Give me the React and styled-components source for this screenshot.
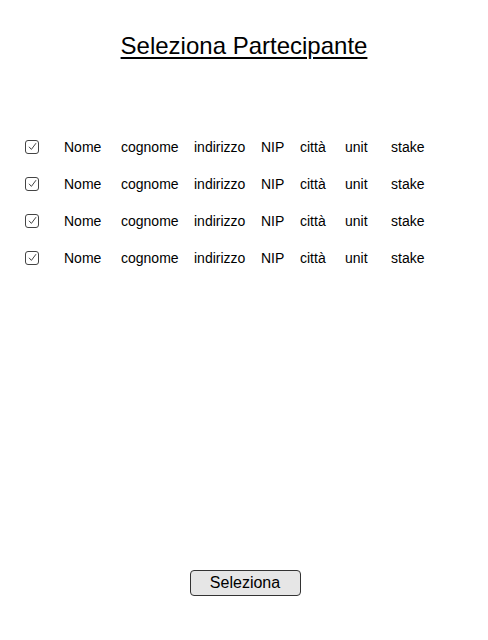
import React from 'react';
import styled, { createGlobalStyle } from 'styled-components';

const GlobalStyle = createGlobalStyle`
  html, body {
    margin: 0;
    padding: 0;
    background: #fff;
  }
  body {
    font-family: "Liberation Sans", Arial, sans-serif;
    color: #000;
  }
`;

const Page = styled.div`
  width: 488px;
  height: 640px;
  display: flex;
  flex-direction: column;
  box-sizing: border-box;
`;

const Title = styled.h1`
  margin: 31px 0 0;
  font-size: 24px;
  font-weight: normal;
  text-align: center;
  text-decoration: underline;
  text-decoration-thickness: 2px;
  text-underline-offset: 3px;
  line-height: 30px;
`;

const List = styled.div`
  margin-top: 67px;
  padding-left: 25px;
  display: flex;
  flex-direction: column;
`;

const Row = styled.div`
  display: grid;
  grid-template-columns: 39px 57px 73px 67px 39px 45px 46px auto;
  align-items: center;
  height: 37px;
  font-size: 14px;
`;

const Cell = styled.span`
  white-space: nowrap;
`;

const Box = styled.span`
  width: 12px;
  height: 12px;
  border: 1.5px solid #444;
  border-radius: 3px;
  display: flex;
  align-items: center;
  justify-content: center;
`;

const Footer = styled.div`
  margin-top: auto;
  margin-bottom: 44px;
  display: flex;
  justify-content: center;
`;

const Button = styled.button`
  width: 111px;
  height: 26px;
  background: #e6e6e6;
  border: 1px solid #333;
  border-radius: 4px;
  font-family: "Liberation Sans", Arial, sans-serif;
  font-size: 16px;
  color: #000;
  padding: 0;
  margin-left: 2px;
`;

const Check = () => (
  <Box>
    <svg width="9" height="9" viewBox="0 0 9 9" fill="none">
      <path d="M1 4.8 L3.4 7.4 L8 1.2" stroke="#444" strokeWidth="1" />
    </svg>
  </Box>
);

const columns = ['Nome', 'cognome', 'indirizzo', 'NIP', 'città', 'unit', 'stake'];

export default function App() {
  return (
    <>
      <GlobalStyle />
      <Page>
        <Title>Seleziona Partecipante</Title>
        <List>
          {[0, 1, 2, 3].map((r) => (
            <Row key={r}>
              <Check />
              {columns.map((c) => (
                <Cell key={c}>{c}</Cell>
              ))}
            </Row>
          ))}
        </List>
        <Footer>
          <Button>Seleziona</Button>
        </Footer>
      </Page>
    </>
  );
}
